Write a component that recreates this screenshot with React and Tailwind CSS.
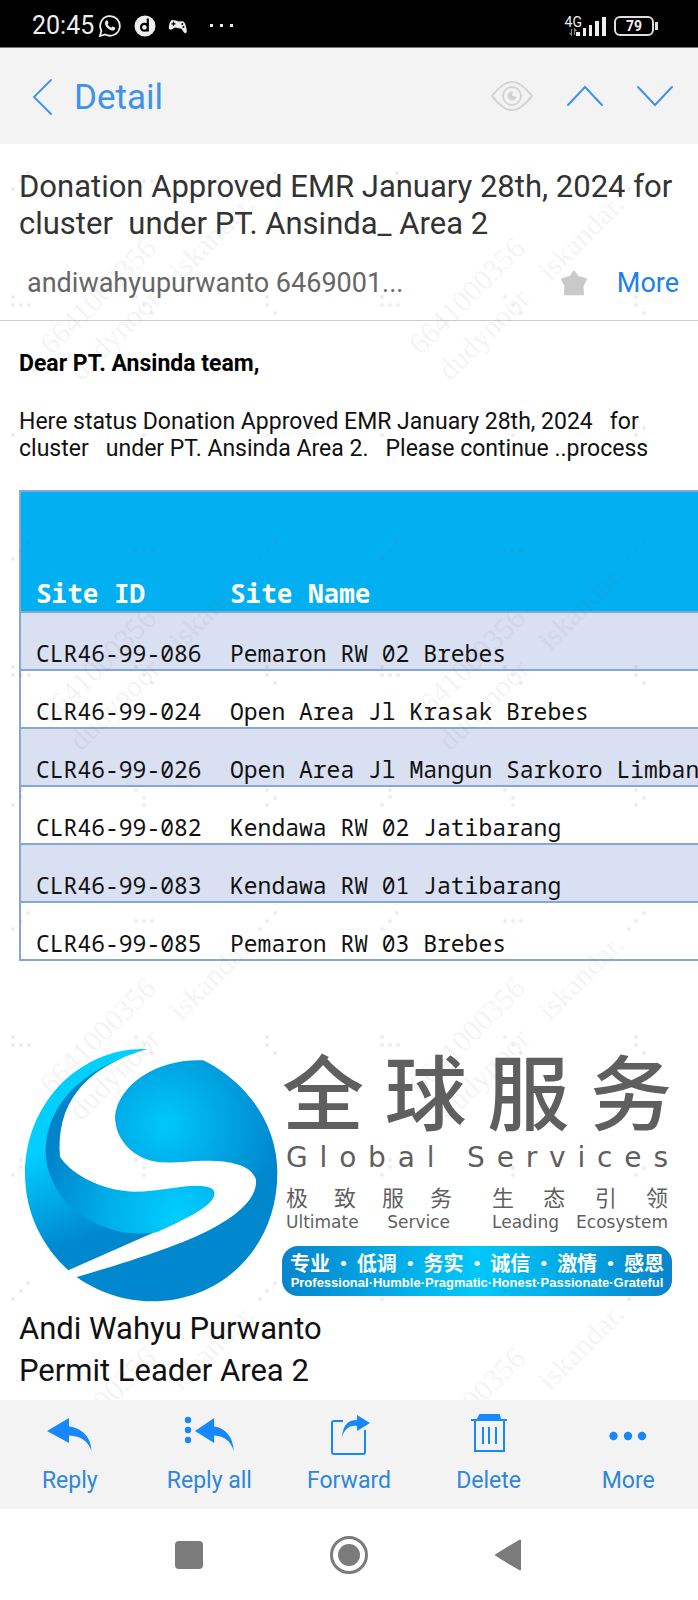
import React from 'react';

const sites = [
  ['CLR46-99-086', 'Pemaron RW 02 Brebes'],
  ['CLR46-99-024', 'Open Area Jl Krasak Brebes'],
  ['CLR46-99-026', 'Open Area Jl Mangun Sarkoro Limbangan'],
  ['CLR46-99-082', 'Kendawa RW 02 Jatibarang'],
  ['CLR46-99-083', 'Kendawa RW 01 Jatibarang'],
  ['CLR46-99-085', 'Pemaron RW 03 Brebes'],
];

function StatusBar() {
  return (
    <div className="flex h-12 shrink-0 items-center justify-between border-b border-[#777] bg-black pl-8 pr-10 pt-1 text-[#eee]">
      <div className="flex items-center">
        <span className="text-[25px] leading-8">20:45</span>
        <svg className="ml-1 h-6 w-6" viewBox="0 0 24 24" fill="none" stroke="currentColor" strokeWidth="1.8">
          <path d="M2 22l1.400-5.400a9.800 9.800 0 1 1 3.900 3.900z" />
          <path fill="currentColor" stroke="none" d="M8.300 6.500c.6-.5 1-.3 1.300.3l.8 1.900c.1.5-.5 1-.9 1.500.8 1.600 2 2.700 3.800 3.500.6-.6 1-1.400 1.600-1.200l2.100 1.100c.5.3.3 1.400-.3 2.100-1.200 1.300-3.200 1-5.400-.2-2.300-1.400-3.900-3.500-4.300-5.400-.2-1.500.4-3 1.300-3.600z" />
        </svg>
        <svg className="ml-3 h-[22px] w-[22px]" viewBox="0 0 22 22">
          <circle cx="11" cy="11" r="10.500" fill="currentColor" />
          <path d="M13.800 3.500v13M13.800 12.300a3.400 3.400 0 1 1-6.800 0 3.400 3.400 0 0 1 6.800 0z" fill="none" stroke="#000" strokeWidth="2.200" />
        </svg>
        <svg className="ml-3 h-[18px] w-5" viewBox="0 0 20 18">
          <path d="M4 3l4 .6 2.500.8 4-.2c2 .2 3.500 3 4.300 9.500.1 2.500-1.500 3.200-3 1.500l-2.300-3.500-6.500-1.200-3 1.800C2 13.300.5 12.300.8 10 1.300 6 2.500 3.500 4 3z" fill="currentColor" />
          <path d="M5.500 4.800v4M3.500 6.800h4" stroke="#000" strokeWidth="1.200" />
          <circle cx="14.300" cy="7" r="1" fill="#000" /><circle cx="15.500" cy="10" r="1" fill="#000" />
        </svg>
        <svg className="ml-5 h-2 w-7" viewBox="0 0 28 8" fill="currentColor">
          <rect x="2" y="2" width="3" height="3" /><rect x="12" y="2" width="3" height="3" /><rect x="22" y="2" width="3" height="3" />
        </svg>
      </div>
      <div className="flex items-center gap-2">
        <div className="flex items-end">
          <div className="flex flex-col items-center">
            <span className="text-sm leading-3">4G</span>
            <svg className="h-2 w-2" viewBox="0 0 8 8" fill="none" stroke="#888" strokeWidth="1.200"><path d="M2.500 1v6L.5 5M5.500 7V1l2 2" /></svg>
          </div>
          <svg className="-ml-2 h-5 w-8" viewBox="0 0 32 20" fill="currentColor">
            <path d="M2 16h4v4H2zM9 12h3v8H9zM15 9h3v11h-3zM21 5h4v15h-4zM28 1h4v19h-4z" />
          </svg>
        </div>
        <div className="flex items-center gap-px">
          <span className="flex h-5 w-10 items-center justify-center rounded-md border-2 border-[#ddd] text-sm font-bold">79</span>
          <span className="h-2 w-[3px] bg-[#ddd]" />
        </div>
      </div>
    </div>
  );
}

function Header() {
  return (
    <header className="flex h-24 shrink-0 items-center justify-between bg-[#f3f3f3] pl-8 pr-6 text-[#3e92e8]">
      <button type="button" className="flex items-center gap-[22px] pt-1 text-[35px] leading-10">
        <svg className="h-10 w-5" viewBox="0 0 20 40" fill="none" stroke="currentColor" strokeWidth="1.800" strokeLinecap="round"><path d="M19 2L2 19l17 17" /></svg>
        Detail
      </button>
      <div className="flex items-center gap-8">
        <button type="button" aria-label="Read status">
          <svg className="h-10 w-11" viewBox="0 0 44 40" fill="none" stroke="#d4d4d4" strokeWidth="2">
            <path d="M2 20C12 8 17 6 22 6s10 2 20 14C32 32 27 34 22 34S12 32 2 20z" />
            <circle cx="22" cy="20" r="9" />
            <path d="M22 20l1-4.500a4.500 4.500 0 1 0 3.500 5.500z" fill="#d0d0d0" stroke="none" />
          </svg>
        </button>
        <button type="button" aria-label="Previous message">
          <svg className="h-10 w-[38px]" viewBox="0 0 38 40" fill="none" stroke="currentColor" strokeWidth="2" strokeLinecap="round"><path d="M2 29l17-18 17 18" /></svg>
        </button>
        <button type="button" aria-label="Next message">
          <svg className="h-10 w-[38px]" viewBox="0 0 38 40" fill="none" stroke="currentColor" strokeWidth="2" strokeLinecap="round"><path d="M2 11l17 18 17-18" /></svg>
        </button>
      </div>
    </header>
  );
}

const TILE = 369;
const dots = [
  [13, 45], [21, 37], [28, 29], [136, 37], [144, 37], [152, 37], [260, 45], [267, 37], [275, 29],
  [13, 153], [13, 161], [21, 161], [29, 161], [136, 153], [144, 161], [152, 169], [267, 153], [267, 161], [275, 169],
  [13, 291], [21, 283], [21, 276], [136, 276], [144, 284], [144, 291], [267, 276], [275, 284], [267, 291],
];

function Watermark() {
  const tiles = [];
  for (let r = 0; r < 4; r++) for (let c = 0; c < 2; c++) tiles.push([c * TILE, r * 370]);
  return (
    <svg className="pointer-events-none absolute inset-0 h-full w-full" aria-hidden="true" fill="#777">
      {tiles.map(([x, y]) => (
        <g key={`${x}-${y}`} transform={`translate(${x} ${y})`}>
          <g opacity="0.08" className="font-['Liberation_Serif',serif]">
            <text transform="translate(52 212) rotate(-45)" fontSize="30">6641000356</text>
            <text transform="translate(81 238) rotate(-45)" fontSize="30">dudynoor</text>
            <text transform="translate(181 138) rotate(-45)" fontSize="30">iskandar.</text>
          </g>
          <g opacity="0.12">
            {dots.map(([dx, dy], i) => <circle key={i} cx={dx} cy={dy} r="2" />)}
          </g>
        </g>
      ))}
    </svg>
  );
}

function Emblem() {
  return (
    <svg className="h-[255px] w-[254px] shrink-0" viewBox="42 55 762 765" role="img" aria-label="Global Services">
      <defs>
        <linearGradient id="rim" gradientUnits="userSpaceOnUse" x1="120" y1="350" x2="230" y2="640">
          <stop offset="0" stopColor="#00cfff" /><stop offset="0.950" stopColor="#0088cf" />
        </linearGradient>
        <radialGradient id="wave" gradientUnits="userSpaceOnUse" cx="500" cy="560" r="420">
          <stop offset="0" stopColor="#00ceff" /><stop offset="0.500" stopColor="#00aee8" /><stop offset="1" stopColor="#0083cb" />
        </radialGradient>
        <radialGradient id="ball" gradientUnits="userSpaceOnUse" cx="465" cy="285" r="340">
          <stop offset="0" stopColor="#00c8fb" /><stop offset="1" stopColor="#0087cd" />
        </radialGradient>
      </defs>
      <path fill="url(#rim)" d="M412 58C225 50 48 205 45 430c0 125 55 222 130 292L440 605 370 560 145 410C130 230 215 115 412 58z" />
      <path fill="url(#wave)" d="M405 62C200 120 105 240 107 370c3 130 145 265 333 238 80-36 160-74 172-108 8-22-12-32-52-32-60 0-110 18-190 18-90-4-180-46-220-104C138 230 215 115 405 62z" />
      <path fill="url(#ball)" d="M580 92C715 160 802 285 802 430c0 220-162 385-377 385-85 0-165-30-225-73 100-30 290-85 400-142 80-42 142-92 138-150-13-45-78-57-148-57-50 0-80 7-140 5-80-8-135-68-135-138 10-100 135-175 265-168z" />
    </svg>
  );
}

function Spread({ text, className }) {
  return (
    <span className={`flex justify-between ${className}`}>
      {Array.from(text).map((ch, i) => <span key={i}>{ch === ' ' ? '\u00a0' : ch}</span>)}
    </span>
  );
}

function Logo() {
  return (
    <div className="mt-[87px] flex items-start gap-1 pl-6">
      <Emblem />
      <div className="w-[390px] font-['Noto_Sans_CJK_SC',sans-serif] text-[#5f5f5f]">
        <Spread text="全球服务" className="text-[82px] font-medium leading-[82px]" />
        <Spread text="Global Services" className="mt-3 px-1 font-['DejaVu_Sans',sans-serif] text-[28px] leading-8" />
        <div className="mt-2 flex justify-between px-1 text-[22px] leading-7">
          <Spread text="极致服务" className="w-[166px]" />
          <Spread text="生态引领" className="w-[176px]" />
        </div>
        <div className="flex justify-between px-1 font-['DejaVu_Sans',sans-serif] text-[17px] leading-6">
          <span className="flex w-[164px] justify-between"><span>Ultimate</span><span>Service</span></span>
          <span className="flex w-[176px] justify-between"><span>Leading</span><span>Ecosystem</span></span>
        </div>
        <div className="mt-3 flex h-[50px] flex-col justify-center rounded-2xl bg-[linear-gradient(90deg,#0884cc,#00c8fa_50%,#0884cc)] px-2 font-bold text-white">
          <div className="flex justify-between text-xl leading-6">
            {['专业', '·', '低调', '·', '务实', '·', '诚信', '·', '激情', '·', '感恩'].map((w, i) => <span key={i}>{w}</span>)}
          </div>
          <div className="whitespace-nowrap text-center font-['Liberation_Sans',sans-serif] text-[13px] leading-4">Professional·Humble·Pragmatic·Honest·Passionate·Grateful</div>
        </div>
      </div>
    </div>
  );
}

const replyArrow = 'M0 13L22 0v8.500C34 10 44 18 44.500 33 41 23 34 18 22 17.500V25z';

const actions = [
  ['Reply', <svg key="i" className="h-10 w-[46px]" viewBox="0 0 46 40" fill="currentColor"><path transform="translate(0 4)" d={replyArrow} /></svg>],
  ['Reply all', <svg key="i" className="h-10 w-[50px]" viewBox="0 0 50 40" fill="currentColor"><circle cx="4" cy="6" r="3.200" /><circle cx="4" cy="16" r="3.200" /><circle cx="4" cy="26" r="3.200" /><path transform="translate(11 4) scale(.87 1)" d={replyArrow} /></svg>],
  ['Forward', <svg key="i" className="h-[42px] w-[42px]" viewBox="0 0 42 42" fill="none" stroke="currentColor" strokeWidth="2"><path d="M15 7H6a2 2 0 0 0-2 2v29a2 2 0 0 0 2 2h29a2 2 0 0 0 2-2V16" /><path d="M14 23C15 12 19 6 29 6V1l13 8-13 8v-5c-8-1-12 3-15 11z" fill="currentColor" stroke="none" /></svg>],
  ['Delete', <svg key="i" className="h-10 w-9" viewBox="0 0 36 40" fill="none" stroke="currentColor" strokeWidth="2"><path d="M0 6h36M4 6v31h29V6M12 13v17M18 13v17M25 13v17" /><path d="M7 5l2-4h19l1 4z" fill="currentColor" /></svg>],
  ['More', <svg key="i" className="h-10 w-10" viewBox="0 0 40 40" fill="currentColor"><circle cx="5.500" cy="22" r="4.200" /><circle cx="20" cy="22" r="4.200" /><circle cx="34" cy="22" r="4.200" /></svg>],
];

export default function App() {
  return (
    <div className="flex min-h-screen flex-col bg-white font-[Roboto,sans-serif]">
      <StatusBar />
      <Header />
      <main className="relative flex-1 overflow-hidden">
        <section className="border-b border-[#ccc] px-[19px] pb-[21px] pt-6">
          <h1 className="whitespace-pre-wrap text-[31px] leading-[37px] text-[#333]">{'Donation Approved EMR January 28th, 2024 for cluster  under PT. Ansinda_ Area 2'}</h1>
          <div className="mt-[25px] flex items-center pl-2 text-[27px] leading-8">
            <span className="flex-1 text-[#666]">andiwahyupurwanto 6469001...</span>
            <svg className="mr-[30px] h-[26px] w-[26px]" viewBox="0 0 26 26" fill="#c9c9c9" stroke="#c9c9c9" strokeWidth="2" strokeLinejoin="round"><path d="M13 1.500l4 5.500 8 2.300-3.500 6.500.5 8.500H4l.5-8.500L1 9.300 9 7z" /></svg>
            <button type="button" className="text-[#2080ea]">More</button>
          </div>
        </section>
        <section className="pt-[29px]">
          <p className="px-[19px] text-[23px] font-bold leading-7 text-black">Dear PT. Ansinda team,</p>
          <p className="mt-[30px] whitespace-pre-wrap px-[19px] text-[23px] leading-[27px] text-[#111]">{'Here status Donation Approved EMR January 28th, 2024   for cluster   under PT. Ansinda Area 2.   Please continue ..process'}</p>
          <div className="mt-7 overflow-hidden pl-[19px]">
            <table className="w-[1100px] border-collapse border-2 border-[#86a6d6] font-['Noto_Sans_Mono','DejaVu_Sans_Mono',monospace] text-[23px] leading-7">
              <thead>
                <tr className="h-[121px] border-b-2 border-[#86a6d6] bg-[#02aff1] text-left align-bottom text-[26px] text-white">
                  <th scope="col" className="w-[195px] pb-1 pl-[15px]">Site ID</th>
                  <th scope="col" className="pb-1 pl-[15px]">Site Name</th>
                </tr>
              </thead>
              <tbody>
                {sites.map(([id, name]) => (
                  <tr key={id} className="h-[58px] border-b-2 border-[#86a6d6] align-bottom text-[#111] odd:bg-[#d9e0f2]">
                    <td className="whitespace-nowrap pb-[2px] pl-[15px]">{id}</td>
                    <td className="whitespace-nowrap pb-[2px] pl-[15px]">{name}</td>
                  </tr>
                ))}
              </tbody>
            </table>
          </div>
          <Logo />
          <p className="mt-[5px] px-[19px] text-[31px] leading-[42px] text-[#111]">Andi Wahyu Purwanto<br />Permit Leader Area 2</p>
        </section>
        <Watermark />
      </main>
      <footer className="grid h-[109px] shrink-0 grid-cols-5 bg-[#f3f3f3] text-[23px] leading-7 text-[#1688fc]">
        {actions.map(([label, icon]) => (
          <button key={label} type="button" className="flex flex-col items-center pt-[14px]">
            <span className="flex h-[42px] items-start">{icon}</span>
            <span className="mt-[11px] text-[#2d86dc]">{label}</span>
          </button>
        ))}
      </footer>
      <nav className="grid h-[91px] shrink-0 grid-cols-3 bg-white px-[109px]">
        <button type="button" aria-label="Recent apps" className="flex items-center justify-center"><span className="h-7 w-7 rounded bg-[#7b7b7b]" /></button>
        <button type="button" aria-label="Home" className="flex items-center justify-center">
          <svg className="h-10 w-10" viewBox="0 0 40 40"><circle cx="20" cy="20" r="17.500" fill="none" stroke="#7b7b7b" strokeWidth="3" /><circle cx="20" cy="20" r="11" fill="#7b7b7b" /></svg>
        </button>
        <button type="button" aria-label="Back" className="flex items-center justify-center">
          <svg className="h-8 w-7" viewBox="0 0 28 32" fill="#7b7b7b" stroke="#7b7b7b" strokeWidth="2" strokeLinejoin="round"><path d="M1 16L25 1.500v29z" /></svg>
        </button>
      </nav>
    </div>
  );
}
